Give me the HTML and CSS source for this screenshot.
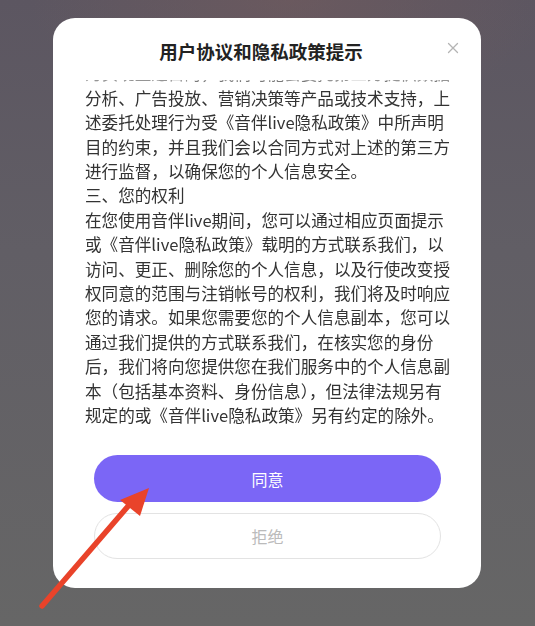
FILE: index.html
```html
<!DOCTYPE html>
<html lang="zh-CN">
<head>
<meta charset="utf-8">
<title>用户协议和隐私政策提示</title>
<link rel="stylesheet" href="styles.css">
</head>
<body>
<div class="screen">
  <div class="modal">
    <div class="header">
      <h1 class="title">用户协议和隐私政策提示</h1>
      <button class="close" aria-label="关闭">
        <svg viewBox="0 0 12 12" width="12" height="12"><path d="M1.5 1.5 L10.5 10.5 M10.5 1.5 L1.5 10.5" stroke="#b4b4b4" stroke-width="1.3" fill="none" stroke-linecap="round"/></svg>
      </button>
    </div>
    <div class="scroll">
      <div class="content">
        <span class="line">为实现上述目的，我们可能会委托第三方提供数据</span>
        <span class="line">分析、广告投放、营销决策等产品或技术支持，上</span>
        <span class="line">述委托处理行为受《音伴live隐私政策》中所声明</span>
        <span class="line">目的约束，并且我们会以合同方式对上述的第三方</span>
        <span class="line">进行监督，以确保您的个人信息安全。</span>
        <span class="line">三、您的权利</span>
        <span class="line">在您使用音伴live期间，您可以通过相应页面提示</span>
        <span class="line">或《音伴live隐私政策》载明的方式联系我们，以</span>
        <span class="line">访问、更正、删除您的个人信息，以及行使改变授</span>
        <span class="line">权同意的范围与注销帐号的权利，我们将及时响应</span>
        <span class="line">您的请求。如果您需要您的个人信息副本，您可以</span>
        <span class="line">通过我们提供的方式联系我们，在核实您的身份</span>
        <span class="line">后，我们将向您提供您在我们服务中的个人信息副</span>
        <span class="line">本（包括基本资料、身份信息），但法律法规另有</span>
        <span class="line">规定的或《音伴live隐私政策》另有约定的除外。</span>
      </div>
    </div>
    <div class="actions">
      <button class="btn btn-agree">同意</button>
      <button class="btn btn-reject">拒绝</button>
    </div>
  </div>
  <svg class="arrow" viewBox="0 0 535 626" width="535" height="626">
    <path d="M42 606 L136 497" stroke="#e9432a" stroke-width="5.5" stroke-linecap="round" fill="none"/>
    <path d="M149 488 L120 500 L140 516 Z" fill="#e9432a"/>
  </svg>
</div>
</body>
</html>
```
FILE: styles.css
```css
* { box-sizing: border-box; }
html, body { margin: 0; padding: 0; }
body {
  width: 535px;
  height: 626px;
  overflow: hidden;
  font-family: "Noto Sans CJK SC", "Noto Sans", sans-serif;
}
.screen {
  position: relative;
  width: 535px;
  height: 626px;
  padding-top: 18px;
  background:
    radial-gradient(ellipse 260px 120px at 290px 0px, rgba(120, 92, 92, 0.5), rgba(120, 92, 92, 0) 100%),
    linear-gradient(to bottom, #5c5661 0%, #615e65 40%, #666666 100%);
}
.modal {
  width: 428px;
  height: 570px;
  margin-left: 53px;
  background: #ffffff;
  border-radius: 22px;
  padding-top: 20px;
  display: flex;
  flex-direction: column;
}
.header {
  display: flex;
  align-items: center;
  padding: 0 22px;
  height: 26px;
}
.title {
  flex: 1;
  margin: 0;
  text-align: center;
  font-size: 18.5px;
  line-height: 26px;
  font-weight: 700;
  color: #222222;
}
.close {
  flex: none;
  width: 12px;
  height: 12px;
  padding: 0;
  border: 0;
  background: none;
  display: flex;
  margin-top: -6px;
}
.scroll {
  margin: 16px 31px 0 32px;
  height: 352px;
  overflow: hidden;
  -webkit-mask-image: linear-gradient(to bottom, rgba(0,0,0,0.45) 0px, #000 4px);
  mask-image: linear-gradient(to bottom, rgba(0,0,0,0.45) 0px, #000 4px);
}
.content {
  margin-top: -18.6px;
  font-size: 16.6px;
  line-height: 24.4px;
  color: #333333;
}
.line {
  display: block;
  white-space: nowrap;
}
.actions {
  display: flex;
  flex-direction: column;
  gap: 11px;
  padding: 23px 40px 0 41px;
}
.btn {
  height: 47px;
  border-radius: 24px;
  font-family: inherit;
  font-size: 16px;
  padding: 0;
  cursor: pointer;
}
.btn-agree {
  background: #7b66f6;
  border: 0;
  color: #ffffff;
}
.btn-reject {
  height: 46px;
  background: #ffffff;
  border: 1px solid #e3e3e3;
  color: #bbbbbb;
}
.arrow {
  position: absolute;
  left: 0;
  top: 0;
  pointer-events: none;
}
```
